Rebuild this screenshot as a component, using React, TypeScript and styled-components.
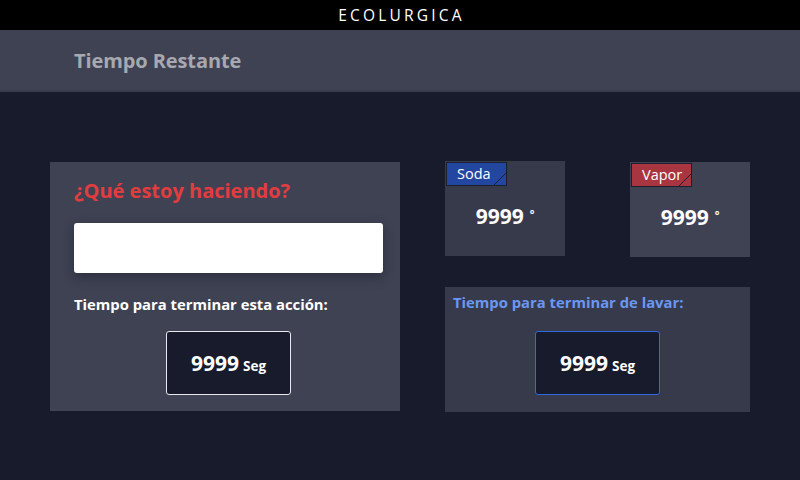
import styled, { createGlobalStyle } from "styled-components";

const GlobalStyle = createGlobalStyle`
  html, body {
    margin: 0;
    padding: 0;
    background: #181b2b;
    font-family: "Open Sans", "Noto Sans", sans-serif;
  }
`;

interface TagProps {
  $color: string;
}

interface CardProps {
  $bg?: string;
}

interface TimerProps {
  $border: string;
}

// tarjeta de temperatura (soda / vapor)
const TempCard = ({ label, color, bg }: { label: string; color: string; bg: string }) => {
  return (
    <SmallCard $bg={bg}>
      <Tag $color={color}>
        {label}
        <TagCorner viewBox="0 0 12 12">
          <line x1="0" y1="12" x2="12" y2="0" stroke="#1c1f2e" strokeWidth="1" />
        </TagCorner>
      </Tag>
      <TempValue>
        9999<Deg>°</Deg>
      </TempValue>
    </SmallCard>
  );
};

export default function App() {
  return (
    <>
      <GlobalStyle />
      <Page>
        <TopBar>ECOLURGICA</TopBar>
        <Header>
          <HeaderTitle>Tiempo Restante</HeaderTitle>
        </Header>
        <Body>
          <MainCard>
            <Question>¿Qué estoy haciendo?</Question>
            <ActionField />
            <Label>Tiempo para terminar esta acción:</Label>
            <TimerWrap>
              <Timer $border="#e8e8ee">
                9999 <Unit>Seg</Unit>
              </Timer>
            </TimerWrap>
          </MainCard>
          <RightCol>
            <TempRow>
              <TempCard label="Soda" color="#2346a0" bg="#373a4b" />
              <TempCard label="Vapor" color="#a8353f" bg="#3f4253" />
            </TempRow>
            <WashCard>
              <WashLabel>Tiempo para terminar de lavar:</WashLabel>
              <TimerWrap>
                <Timer $border="#2f6ae0">
                  9999 <Unit>Seg</Unit>
                </Timer>
              </TimerWrap>
            </WashCard>
          </RightCol>
        </Body>
      </Page>
    </>
  );
}

const Page = styled.div`
  width: 800px;
  height: 480px;
  display: flex;
  flex-direction: column;
  background: #181b2b;
  overflow: hidden;
`;

const TopBar = styled.div`
  height: 30px;
  background: #000000;
  color: #ffffff;
  display: flex;
  align-items: center;
  justify-content: center;
  font-size: 15.5px;
  letter-spacing: 3.2px;
  padding-left: 3px;
`;

const Header = styled.div`
  height: 62px;
  box-sizing: border-box;
  background: #3f4253;
  border-bottom: 2px solid #393c4d;
  display: flex;
  align-items: center;
  padding-left: 74px;
`;

const HeaderTitle = styled.h1`
  margin: 0;
  font-size: 20px;
  font-weight: 700;
  color: #a7a8b0;
  letter-spacing: -0.1px;
`;

const Body = styled.div`
  display: grid;
  grid-template-columns: 350px 305px;
  column-gap: 45px;
  padding: 69px 0 0 50px;
  align-items: start;
`;

const MainCard = styled.section`
  height: 249px;
  margin-top: 1px;
  box-sizing: border-box;
  background: #3f4253;
  padding: 14px 17px 0 24px;
  display: flex;
  flex-direction: column;
`;

const Question = styled.h2`
  margin: 0;
  font-size: 20px;
  font-weight: 700;
  color: #e23c3f;
  line-height: 30px;
`;

const ActionField = styled.div`
  margin-top: 17px;
  height: 50px;
  background: #ffffff;
  border-radius: 3px;
  box-shadow: 0 4px 12px rgba(20, 22, 35, 0.45);
`;

const Label = styled.div`
  margin-top: 21px;
  font-size: 14.8px;
  font-weight: 700;
  color: #ffffff;
  line-height: 20px;
`;

const TimerWrap = styled.div`
  display: flex;
  justify-content: center;
  margin-top: 17px;
`;

const Timer = styled.div<TimerProps>`
  width: 125px;
  height: 64px;
  box-sizing: border-box;
  background: #181b2b;
  border: 1px solid ${(p) => p.$border};
  border-radius: 3px;
  display: flex;
  align-items: center;
  justify-content: center;
  gap: 4px;
  color: #ffffff;
  font-size: 21px;
  font-weight: 700;
`;

const Unit = styled.span`
  font-size: 13.5px;
  font-weight: 700;
  padding-top: 5px;
`;

const RightCol = styled.div`
  display: flex;
  flex-direction: column;
  gap: 30px;
`;

const TempRow = styled.div`
  display: flex;
  justify-content: space-between;
`;

const SmallCard = styled.div<CardProps>`
  position: relative;
  width: 120px;
  height: 95px;
  background: ${(p) => p.$bg || "#373a4b"};
  display: flex;
  align-items: center;
  justify-content: center;
  padding-top: 14px;
  box-sizing: border-box;
  &:last-child {
    margin-top: 1px;
  }
`;

const Tag = styled.div<TagProps>`
  position: absolute;
  top: 1px;
  left: 1px;
  width: 61px;
  height: 24px;
  box-sizing: border-box;
  background: ${(p) => p.$color};
  border: 1px solid #1c1f2e;
  color: #ffffff;
  font-size: 14.5px;
  line-height: 22px;
  padding-left: 10px;
`;

const TagCorner = styled.svg`
  position: absolute;
  right: 0;
  bottom: 0;
  width: 12px;
  height: 12px;
`;

const TempValue = styled.div`
  color: #ffffff;
  font-size: 21px;
  font-weight: 700;
  display: flex;
  align-items: center;
  gap: 6px;
`;

const Deg = styled.span`
  font-size: 11px;
  font-weight: 700;
  padding-bottom: 4px;
`;

const WashCard = styled.section`
  height: 125px;
  box-sizing: border-box;
  background: #373a4b;
  padding: 5px 8px 0 8px;
  display: flex;
  flex-direction: column;
`;

const WashLabel = styled.div`
  font-size: 14.8px;
  font-weight: 700;
  color: #6a97f2;
  line-height: 20px;
  margin-bottom: 2px;
`;
